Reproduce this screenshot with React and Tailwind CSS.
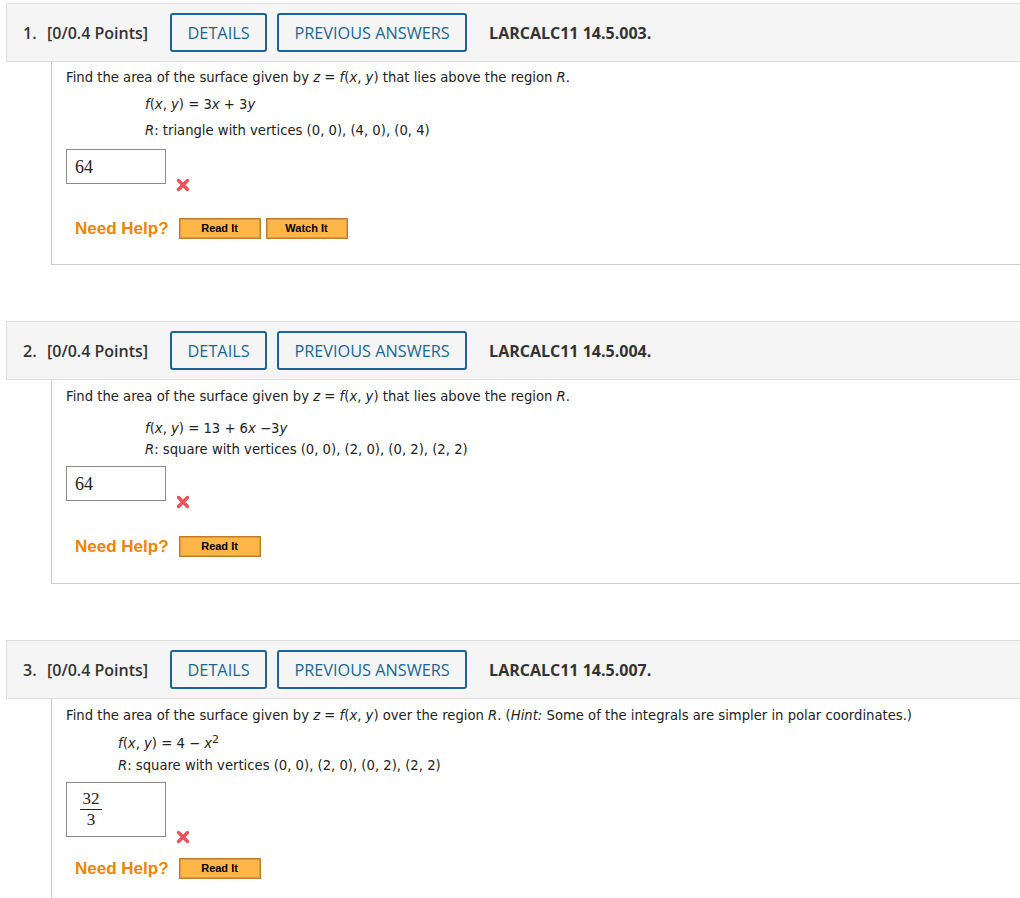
import React from "react";

const RedX = () => (
  <svg width="14" height="14" viewBox="0 0 14 14">
    <path d="M2.5 2.5 L11.5 11.5 M11.5 2.5 L2.5 11.5" stroke="#f0505a" strokeWidth="3.4" strokeLinecap="round" />
  </svg>
);

const HelpButton = ({ label, w }) => (
  <button
    className={`h-[21px] ${w} border border-[#c07c2e] bg-[#fdb647] shadow-[inset_0_0_0_1px_#e8962f] text-[11px] font-bold text-black leading-none`}
    style={{ fontFamily: "'Liberation Sans', Arial, sans-serif" }}
  >
    {label}
  </button>
);

const Header = ({ num, code }) => (
  <div
    className="ml-[6px] h-[59px] flex items-center pl-[16px] bg-[#f5f5f5] border-y border-l border-[#dddddd] text-[16px] text-[#333]"
    style={{ fontFamily: "'Open Sans', sans-serif" }}
  >
    <span className="font-semibold w-[24px]">{num}.</span>
    <span className="font-semibold">[0/0.4 Points]</span>
    <button className="ml-[22px] h-[39px] w-[97px] pt-[2px] rounded-[3px] border-2 border-[#1a6597] text-[#1a6597] text-[16.3px]">
      DETAILS
    </button>
    <button className="ml-[10px] h-[39px] w-[190px] pt-[2px] rounded-[3px] border-2 border-[#1a6597] text-[#1a6597] text-[16.3px]">
      PREVIOUS ANSWERS
    </button>
    <span className="ml-[22px] font-bold">{code}</span>
  </div>
);

const Answer = ({ children, h, xTop }) => (
  <div className="flex items-start">
    <div className={`w-[100px] ${h} border border-[#8a8a8a] bg-white flex items-center pl-[8px] text-[18px] text-[#222]`}
      style={{ fontFamily: "'Liberation Serif', 'Times New Roman', serif" }}>
      {children}
    </div>
    <div className={`ml-[10px] ${xTop}`}>
      <RedX />
    </div>
  </div>
);

const NeedHelp = ({ watch, mt }) => (
  <div className={`flex items-center ${mt} ml-[9px]`}>
    <span className="text-[17px] font-bold text-[#f08300] leading-[21px]" style={{ fontFamily: "'Liberation Sans', Arial, sans-serif" }}>
      Need Help?
    </span>
    <div className="ml-[10px] flex gap-[5px]">
      <HelpButton label="Read It" w="w-[82px]" />
      {watch && <HelpButton label="Watch It" w="w-[82px]" />}
    </div>
  </div>
);

const Var = ({ children }) => <i>{children}</i>;

const bodyFont = { fontFamily: "'DejaVu Sans', Verdana, sans-serif" };

export default function App() {
  return (
    <div className="bg-white w-[1020px] min-h-[898px] pt-[3px] text-[#222]">
      {/* Question 1 */}
      <Header num="1" code="LARCALC11 14.5.003." />
      <div className="ml-[51px] h-[203px] border-l border-b border-[#cccccc] pl-[14px] pt-[7px] text-[13.2px] leading-[18px]" style={bodyFont}>
        <p>
          Find the area of the surface given by <Var>z</Var> = <Var>f</Var>(<Var>x</Var>, <Var>y</Var>) that lies above the region <Var>R</Var>.
        </p>
        <div className="pl-[79px] mt-[5px] leading-[26px]">
          <div><Var>f</Var>(<Var>x</Var>, <Var>y</Var>) = 3<Var>x</Var> + 3<Var>y</Var></div>
          <div><Var>R</Var>: triangle with vertices (0, 0), (4, 0), (0, 4)</div>
        </div>
        <div className="mt-[5px]">
          <Answer h="h-[35px]" xTop="mt-[29px]">64</Answer>
        </div>
        <NeedHelp watch mt="mt-[26px]" />
      </div>

      <div className="h-[56px]" />

      {/* Question 2 */}
      <Header num="2" code="LARCALC11 14.5.004." />
      <div className="ml-[51px] h-[204px] border-l border-b border-[#cccccc] pl-[14px] pt-[8px] text-[13.2px] leading-[18px]" style={bodyFont}>
        <p>
          Find the area of the surface given by <Var>z</Var> = <Var>f</Var>(<Var>x</Var>, <Var>y</Var>) that lies above the region <Var>R</Var>.
        </p>
        <div className="pl-[79px] mt-[12px] leading-[21px]">
          <div><Var>f</Var>(<Var>x</Var>, <Var>y</Var>) = 13 + 6<Var>x</Var> −3<Var>y</Var></div>
          <div><Var>R</Var>: square with vertices (0, 0), (2, 0), (0, 2), (2, 2)</div>
        </div>
        <div className="mt-[6px]">
          <Answer h="h-[35px]" xTop="mt-[29px]">64</Answer>
        </div>
        <NeedHelp mt="mt-[27px]" />
      </div>

      <div className="h-[56px]" />

      {/* Question 3 */}
      <Header num="3" code="LARCALC11 14.5.007." />
      <div className="ml-[51px] h-[200px] border-l border-[#cccccc] pl-[14px] pt-[8px] text-[13.2px] leading-[18px]" style={bodyFont}>
        <p>
          Find the area of the surface given by <Var>z</Var> = <Var>f</Var>(<Var>x</Var>, <Var>y</Var>) over the region <Var>R</Var>. (<Var>Hint:</Var> Some of the integrals are simpler in polar coordinates.)
        </p>
        <div className="pl-[52px] mt-[8px] leading-[22px]">
          <div>
            <Var>f</Var>(<Var>x</Var>, <Var>y</Var>) = 4 − <Var>x</Var>
            <sup className="text-[11px]">2</sup>
          </div>
          <div><Var>R</Var>: square with vertices (0, 0), (2, 0), (0, 2), (2, 2)</div>
        </div>
        <div className="mt-[5px]">
          <Answer h="h-[55px]" xTop="mt-[48px]">
            <div className="flex flex-col items-center ml-[5px] text-[17px] leading-[20px]">
              <span>32</span>
              <span className="w-[22px] border-t border-[#222]" />
              <span>3</span>
            </div>
          </Answer>
        </div>
        <NeedHelp mt="mt-[14px]" />
      </div>
    </div>
  );
}
